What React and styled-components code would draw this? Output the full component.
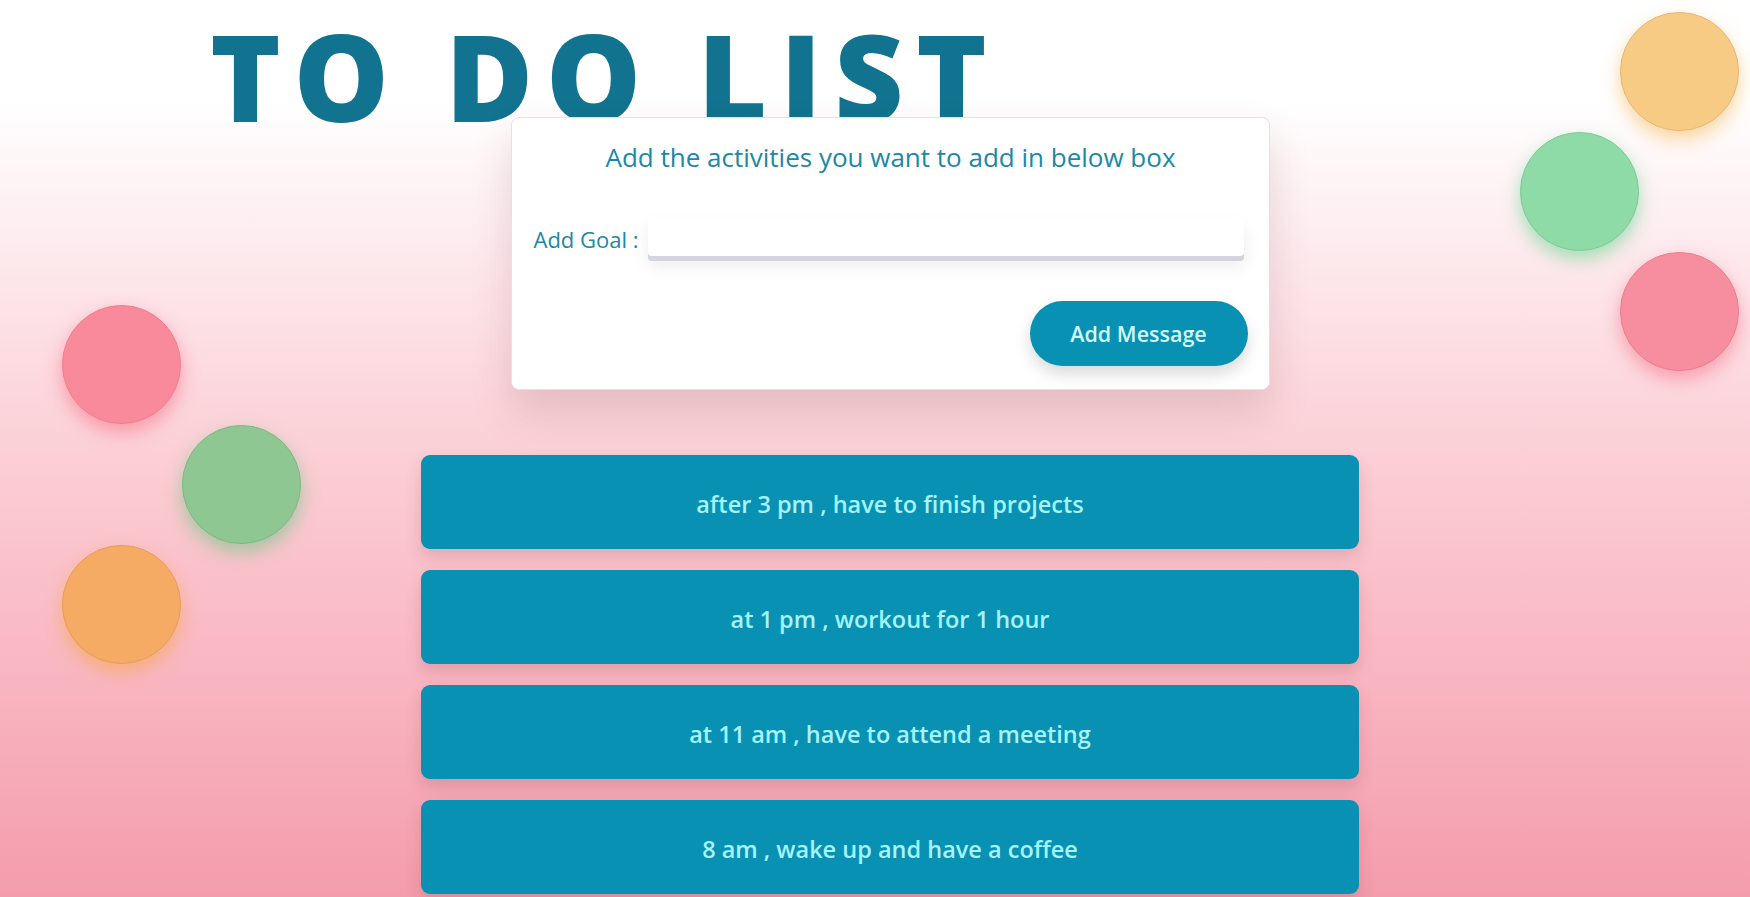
import React, { useState } from "react";
import styled, { createGlobalStyle } from "styled-components";

const GlobalStyle = createGlobalStyle`
  html, body {
    margin: 0;
    padding: 0;
  }
  body {
    font-family: "Open Sans", "Noto Sans", sans-serif;
    min-height: 897px;
    background: linear-gradient(
      to bottom,
      #ffffff 0px,
      #ffffff 100px,
      #fde6ea 280px,
      #fbc9d1 500px,
      #f8b3bf 700px,
      #f49cac 897px
    );
    background-repeat: no-repeat;
    overflow: hidden;
  }
`;

const initialGoals = [
  "after 3 pm , have to finish projects",
  "at 1 pm , workout for 1 hour",
  "at 11 am , have to attend a meeting",
  "8 am , wake up and have a coffee",
];

const bubbles = [
  { left: 62, top: 305, color: "#f98a9c", edge: "#ee7f8c" },
  { left: 182, top: 425, color: "#8fc793", edge: "#80b785" },
  { left: 62, top: 545, color: "#f6ab64", edge: "#e69c5e" },
  { left: 1620, top: 12, color: "#f8cb84", edge: "#e8b57a" },
  { left: 1520, top: 132, color: "#8edba8", edge: "#7ccb97" },
  { left: 1620, top: 252, color: "#f78ea0", edge: "#ea7e8c" },
];

const App = () => {
  const [goals, setGoals] = useState(initialGoals);
  const [text, setText] = useState("");

  const addGoal = () => {
    if (!text.trim()) return;
    setGoals([text, ...goals]);
    setText("");
  };

  return (
    <>
      <GlobalStyle />
      <Page>
        {bubbles.map((b, i) => (
          <Bubble key={i} $color={b.color} $edge={b.edge} style={{ left: b.left, top: b.top }} />
        ))}
        <Title>TO DO LIST</Title>
        <Main>
          <Card>
            <CardTitle>Add the activities you want to add in below box</CardTitle>
            <GoalRow>
              <Label htmlFor="goal">Add Goal :</Label>
              <GoalInput
                id="goal"
                value={text}
                onChange={(e) => setText(e.target.value)}
              />
            </GoalRow>
            <Actions>
              <AddButton onClick={addGoal}>Add Message</AddButton>
            </Actions>
          </Card>
          <GoalList>
            {goals.map((g, i) => (
              <GoalItem key={i}>{g}</GoalItem>
            ))}
          </GoalList>
        </Main>
      </Page>
    </>
  );
};

const Page = styled.div`
  position: relative;
  display: flow-root;
  min-height: 897px;
`;

const Bubble = styled.div`
  position: absolute;
  width: 117px;
  height: 117px;
  border-radius: 50%;
  background: ${(p) => p.$color};
  border: 1px solid ${(p) => p.$edge};
  box-shadow: 0 8px 18px ${(p) => p.$color}cc;
`;

const Title = styled.h1`
  margin: 34px 0 0 210px;
  font-family: "Open Sans", sans-serif;
  font-weight: 800;
  font-size: 120px;
  line-height: 83px;
  letter-spacing: 12.5px;
  color: #11738f;
`;

const Main = styled.main`
  display: flex;
  flex-direction: column;
  align-items: center;
  padding-left: 30px;
`;

const Card = styled.section`
  position: relative;
  box-sizing: border-box;
  width: 759px;
  height: 273px;
  padding: 22px 21px 23px 22px;
  background: #fff;
  border: 1px solid #e3e3e6;
  border-radius: 8px;
  box-shadow: 0 22px 40px rgba(120, 60, 70, 0.18);
  display: flex;
  flex-direction: column;
`;

const CardTitle = styled.h2`
  margin: 0;
  text-align: center;
  font-size: 26px;
  font-weight: 400;
  line-height: 34px;
  color: #1a89a7;
`;

const GoalRow = styled.div`
  display: flex;
  align-items: center;
  gap: 9px;
  margin-top: 43px;
  padding-right: 4px;
`;

const Label = styled.label`
  font-size: 22px;
  color: #1a89a7;
  white-space: nowrap;
`;

const GoalInput = styled.input`
  flex: 1;
  height: 39px;
  margin-bottom: 5px;
  border: none;
  outline: none;
  border-radius: 4px;
  background: #fff;
  box-shadow: 0 5px 0 #d3d5de, 0 10px 18px rgba(0, 0, 0, 0.08);
  font: inherit;
  font-size: 18px;
  padding: 0 10px;
`;

const Actions = styled.div`
  display: flex;
  justify-content: flex-end;
  margin-top: auto;
`;

const AddButton = styled.button`
  width: 218px;
  height: 65px;
  border: none;
  border-radius: 33px;
  background: #0891b2;
  color: #cffafe;
  font-family: inherit;
  font-size: 21.5px;
  font-weight: 600;
  cursor: pointer;
  box-shadow: 0 8px 16px rgba(0, 0, 0, 0.15);
`;

const GoalList = styled.ul`
  list-style: none;
  margin: 65px 0 0;
  padding: 0;
  width: 938px;
  display: flex;
  flex-direction: column;
  gap: 21px;
`;

const GoalItem = styled.li`
  box-sizing: border-box;
  height: 94px;
  padding-top: 4px;
  display: flex;
  align-items: center;
  justify-content: center;
  border-radius: 9px;
  background: #0891b2;
  color: #a5f3fc;
  font-size: 23.5px;
  font-weight: 600;
  box-shadow: 0 8px 16px rgba(120, 50, 60, 0.18);
`;

export default App;
